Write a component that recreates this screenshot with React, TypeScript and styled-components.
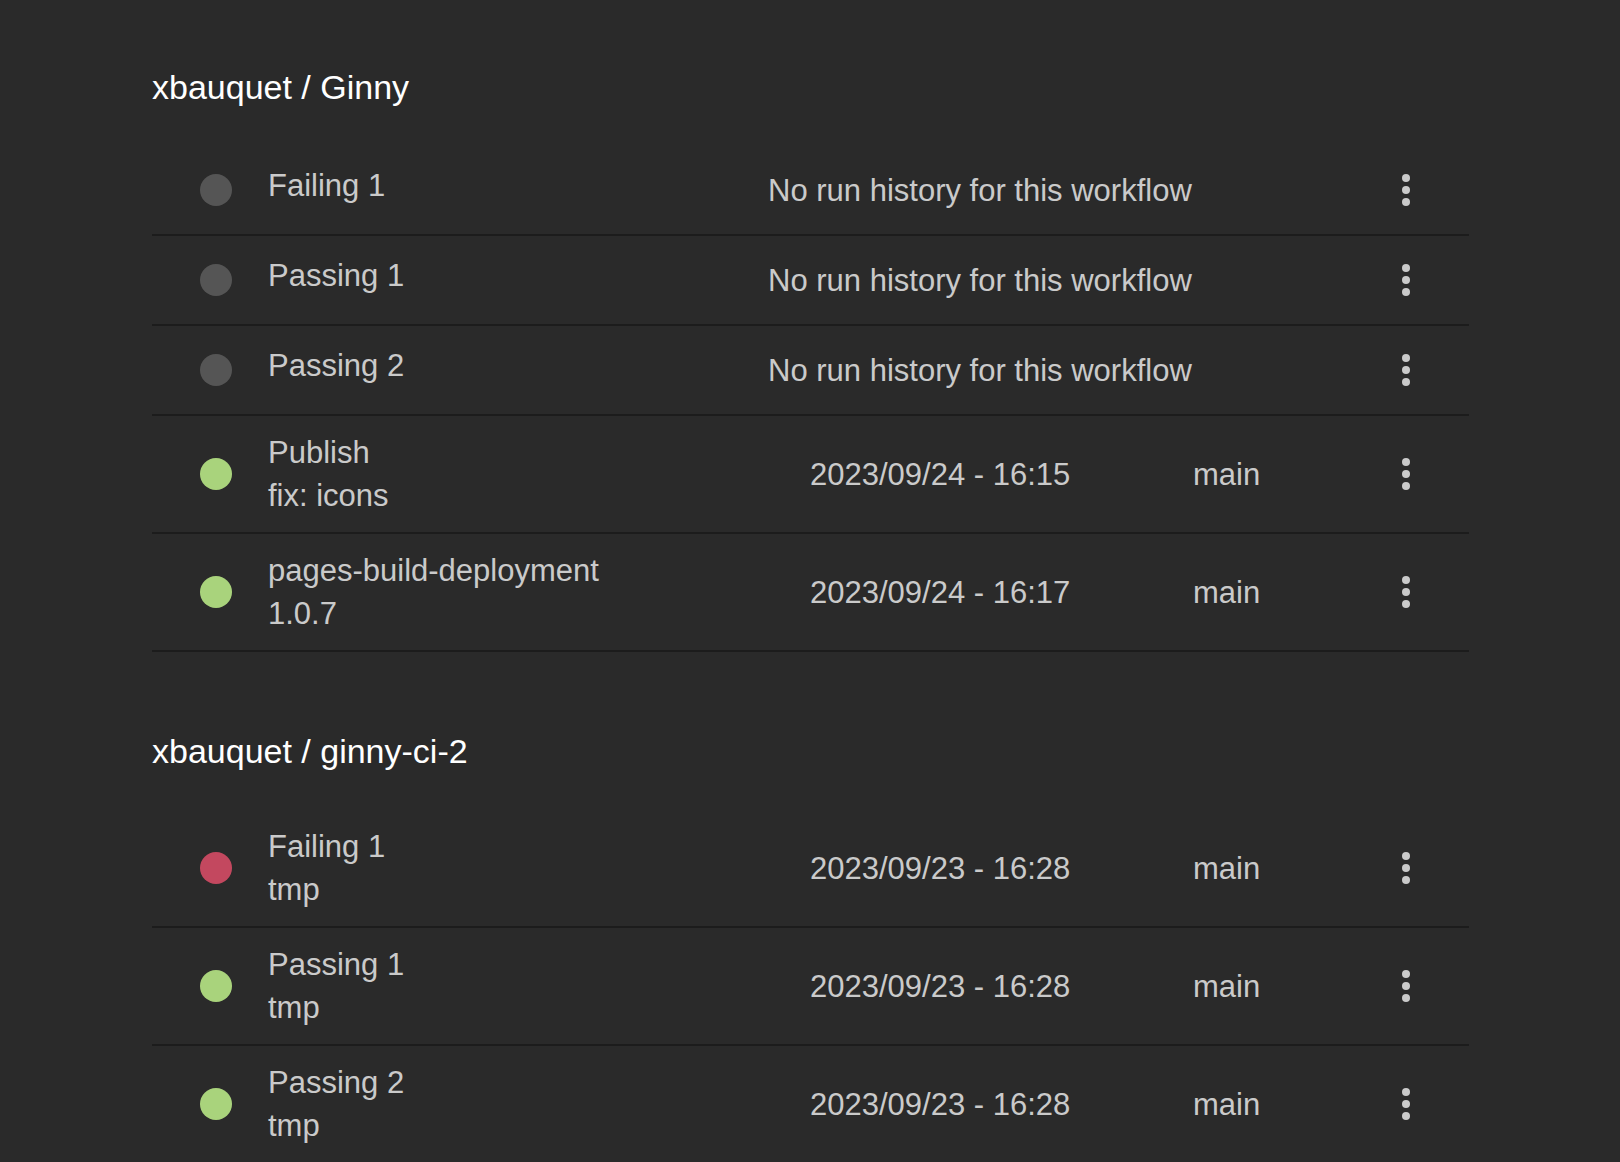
import React from "react";
import styled, { createGlobalStyle } from "styled-components";

const GlobalStyle = createGlobalStyle`
  html, body {
    margin: 0;
    padding: 0;
    background: #2a2a2a;
  }
  body {
    font-family: "Liberation Sans", Arial, Helvetica, sans-serif;
  }
`;

const Page = styled.main`
  width: 1318px;
  margin: 0 auto;
  padding: 67px 0 0 1px;
  box-sizing: border-box;
  display: flex;
  flex-direction: column;
  gap: 79px;
`;

const Section = styled.section`
  display: flex;
  flex-direction: column;
`;

const RepoTitle = styled.h2`
  margin: 0 0 39px 0;
  font-size: 34px;
  line-height: 40px;
  font-weight: 400;
  color: #ffffff;
`;

const List = styled.ul`
  list-style: none;
  margin: 0;
  padding: 0;
`;

const Row = styled.li`
  display: grid;
  grid-template-columns: 32px 536px 425px 193px 40px;
  align-items: center;
  min-height: 90px;
  padding: 15px 44px 15px 48px;
  box-sizing: border-box;
  border-bottom: 2px solid #1c1c1c;
  color: #cacaca;
  font-size: 31px;
  line-height: 43px;
`;

type Status = "none" | "success" | "failure";

const dotColors: Record<Status, string> = {
  none: "#555555",
  success: "#a9d37c",
  failure: "#c3485f",
};

const StatusDot = styled.span<{ $status: Status }>`
  width: 32px;
  height: 32px;
  border-radius: 50%;
  background: ${(p) => dotColors[p.$status]};
`;

const NameBlock = styled.div<{ $single: boolean }>`
  padding-left: 36px;
  padding-bottom: ${(p) => (p.$single ? "10px" : "0")};
  display: flex;
  flex-direction: column;
`;

const Line = styled.span`
  white-space: nowrap;
`;

const EmptyNote = styled.span`
  grid-column: 3 / 5;
  white-space: nowrap;
`;

const DateCell = styled.span`
  padding-left: 42px;
  white-space: nowrap;
`;

const BranchCell = styled.span`
  white-space: nowrap;
`;

const MenuButton = styled.button`
  width: 40px;
  height: 40px;
  padding: 0;
  border: none;
  background: transparent;
  display: flex;
  align-items: center;
  justify-content: center;
  cursor: pointer;
`;

const Kebab = () => (
  <svg width="8" height="32" viewBox="0 0 8 32" aria-hidden="true">
    <circle cx="4" cy="4" r="4" fill="#cacaca" />
    <circle cx="4" cy="16" r="4" fill="#cacaca" />
    <circle cx="4" cy="28" r="4" fill="#cacaca" />
  </svg>
);

type Workflow = {
  name: string;
  status: Status;
  message?: string;
  date?: string;
  branch?: string;
};

type Repo = { title: string; workflows: Workflow[] };

const repos: Repo[] = [
  {
    title: "xbauquet / Ginny",
    workflows: [
      { name: "Failing 1", status: "none" },
      { name: "Passing 1", status: "none" },
      { name: "Passing 2", status: "none" },
      {
        name: "Publish",
        status: "success",
        message: "fix: icons",
        date: "2023/09/24 - 16:15",
        branch: "main",
      },
      {
        name: "pages-build-deployment",
        status: "success",
        message: "1.0.7",
        date: "2023/09/24 - 16:17",
        branch: "main",
      },
    ],
  },
  {
    title: "xbauquet / ginny-ci-2",
    workflows: [
      {
        name: "Failing 1",
        status: "failure",
        message: "tmp",
        date: "2023/09/23 - 16:28",
        branch: "main",
      },
      {
        name: "Passing 1",
        status: "success",
        message: "tmp",
        date: "2023/09/23 - 16:28",
        branch: "main",
      },
      {
        name: "Passing 2",
        status: "success",
        message: "tmp",
        date: "2023/09/23 - 16:28",
        branch: "main",
      },
    ],
  },
];

export default function App() {
  return (
    <>
      <GlobalStyle />
      <Page>
        {repos.map((repo) => (
          <Section key={repo.title}>
            <RepoTitle>{repo.title}</RepoTitle>
            <List>
              {repo.workflows.map((wf) => {
                const hasRun = Boolean(wf.date);
                return (
                  <Row key={wf.name}>
                    <StatusDot $status={wf.status} />
                    <NameBlock $single={!wf.message}>
                      <Line>{wf.name}</Line>
                      {wf.message && <Line>{wf.message}</Line>}
                    </NameBlock>
                    {hasRun ? (
                      <>
                        <DateCell>{wf.date}</DateCell>
                        <BranchCell>{wf.branch}</BranchCell>
                      </>
                    ) : (
                      <EmptyNote>No run history for this workflow</EmptyNote>
                    )}
                    <MenuButton aria-label="More actions">
                      <Kebab />
                    </MenuButton>
                  </Row>
                );
              })}
            </List>
          </Section>
        ))}
      </Page>
    </>
  );
}
